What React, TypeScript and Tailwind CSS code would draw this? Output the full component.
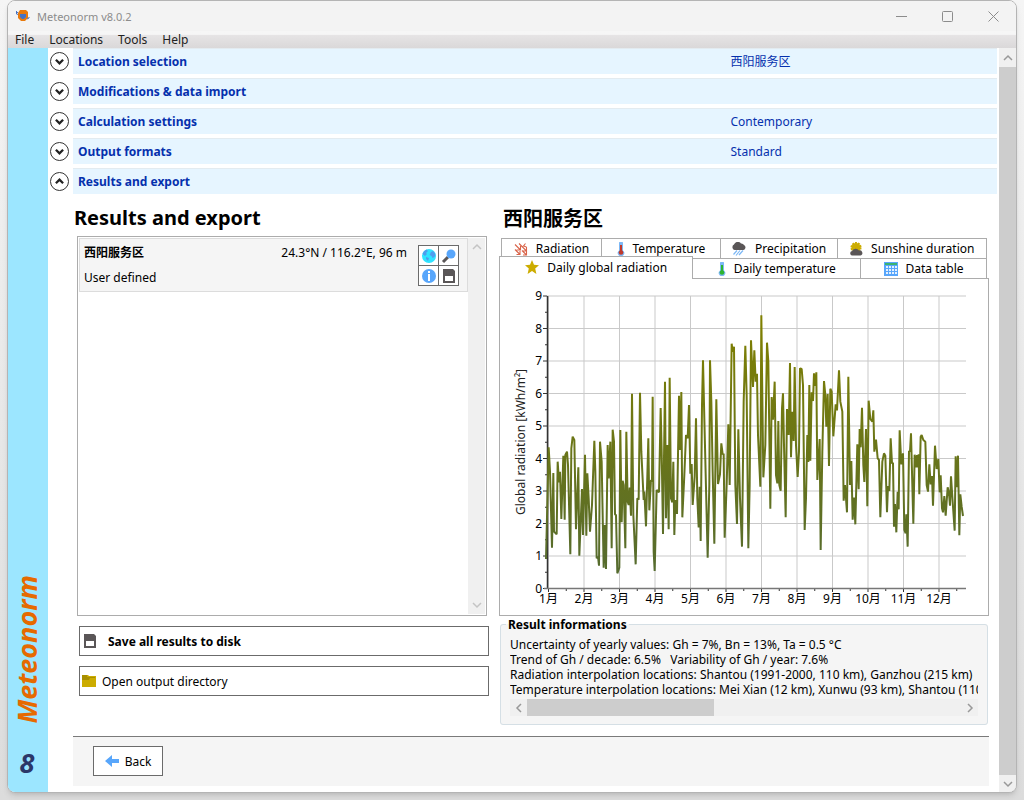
import { ReactNode } from 'react';

const SECTIONS = [
  { title: 'Location selection', value: '西阳服务区', open: false },
  { title: 'Modifications & data import', value: '', open: false },
  { title: 'Calculation settings', value: 'Contemporary', open: false },
  { title: 'Output formats', value: 'Standard', open: false },
  { title: 'Results and export', value: '', open: true },
];

// daily global radiation, plotted in thirds of a pixel
const DAILY =
  '138,822 146,487 150,560 156,788 160,564 162,740 170,748 173,530 177,592 180,560 184,702 190,512 194,704 196,510 201,500 204,540 211,808 214,490 218,455 223,465 228,733 235,547 238,812 246,612 249,750 255,509 259,752 262,565 266,640 270,740 276,660 283,467 286,560 290,820 294,815 297,842 300,470 305,530 311,848 314,720 318,852 323,480 326,580 331,470 335,790 338,434 342,470 345,688 348,690 352,865 358,848 361,435 365,712 368,587 371,600 376,790 379,440 383,650 386,660 389,608 393,692 396,326 400,690 407,838 412,640 416,644 420,323 424,500 431,645 433,620 438,724 445,460 448,676 453,585 456,590 458,335 461,800 464,858 ' +
  '470,615 477,622 482,369 485,500 489,747 495,290 498,700 502,480 506,733 509,278 513,640 517,652 520,530 523,750 526,645 531,687 537,332 540,495 544,321 547,697 553,570 558,450 563,460 567,360 571,566 575,537 578,660 584,575 588,400 592,640 596,727 599,605 602,768 606,360 609,226 613,400 623,818 628,600 630,226 634,350 638,560 643,776 649,343 654,597 660,568 664,475 668,508 671,506 674,758 680,600 685,418 689,600 695,176 698,200 702,185 706,600 711,717 715,433 720,640 726,785 731,350 736,182 740,330 745,790 749,600 753,166 759,306 763,196 767,290 771,266 774,450 781,605 784,91 ' +
  '790,577 796,480 801,173 805,230 811,671 815,336 819,404 824,290 828,570 832,595 835,408 838,600 842,617 846,370 849,325 852,480 857,697 861,372 866,450 870,234 873,517 877,380 881,468 884,246 888,480 893,576 897,500 900,250 905,252 909,300 912,560 914,735 918,640 922,450 925,531 928,300 931,527 935,322 939,348 942,265 946,303 949,262 952,585 959,462 962,795 967,500 972,288 976,330 979,425 983,327 987,543 991,311 995,320 1000,454 1007,358 1011,376 1017,256 1021,350 1027,380 1031,647 1035,600 1041,682 1045,275 1050,600 1054,528 1058,704 1062,638 1066,718 1072,478 1076,613 1079,432 1082,487 1086,368 1090,540 1093,591 1098,432 1102,664 1106,347 ' +
  '1111,402 1117,410 1120,376 1123,500 1128,464 1133,520 1137,525 1141,697 1147,530 1152,505 1156,512 1161,682 1164,603 1168,618 1172,460 1176,535 1179,533 1182,725 1185,657 1189,742 1193,620 1196,673 1199,436 1204,538 1209,505 1213,735 1217,745 1219,688 1223,785 1227,498 1230,500 1233,445 1240,716 1244,509 1248,547 1251,510 1254,547 1256,508 1258,628 1262,455 1265,450 1270,465 1276,470 1280,600 1284,620 1288,538 1292,598 1296,573 1299,662 1305,482 1310,552 1315,522 1319,622 1322,571 1326,670 1329,682 1333,633 1337,692 1343,607 1347,625 1350,662 1353,574 1358,650 1364,737 1367,514 1370,607 1374,512 1378,751 1381,628 1385,665 1389,693';

function Chevron({ dir, className = 'size-[10px] stroke-[1.5]' }: { dir: 'up' | 'down' | 'left' | 'right'; className?: string }) {
  const paths = {
    up: 'M1 7 5 3 9 7',
    down: 'M1 3 5 7 9 3',
    left: 'M7 1 3 5 7 9',
    right: 'M3 1 7 5 3 9',
  };
  return (
    <svg viewBox="0 0 10 10" className={className} fill="none" stroke="currentColor">
      <path d={paths[dir]} />
    </svg>
  );
}

function LogoIcon() {
  return (
    <svg viewBox="0 0 14 14" className="size-[14px]">
      <path d="M4 1h6l2 2v6l-3 3H5L2 9V4z" fill="#e87a0c" />
      <path d="M4 5h6v3L8 10H6L4 8z" fill="#4472c4" />
      <path d="M0 2l2 2M0.5 3v2l1.5.5M11 10l2-1M13 8v1" stroke="#4472c4" fill="none" />
    </svg>
  );
}

function RadiationIcon() {
  return (
    <svg viewBox="0 0 14 14" className="size-[14px]" fill="none" stroke="#d9644a" strokeWidth="1.1">
      <path d="M1 2.500l5 5M1 7.500l4.500 4.500M6.500 4v4H2.500M6 9v3.500H2.500M5 1.500l7 7M12.500 5v4h-4M8 8.500l4 4M12.500 9.500v3.500H9M11.500 1.500l-2 2.500 3 1" />
    </svg>
  );
}

function ThermometerIcon({ color }: { color: string }) {
  return (
    <svg viewBox="0 0 8 14" className="w-[8px] h-[14px]">
      <path d="M2 1a2 1.500 0 0 1 4 0v7.500a3.200 3.200 0 1 1-4 0z" fill="#7db8f5" />
      <circle cx="4" cy="10.500" r="2.300" fill={color} />
      <path d="M3 3h2v8H3z" fill={color} />
    </svg>
  );
}

function RainIcon() {
  return (
    <svg viewBox="0 0 16 14" className="w-[16px] h-[14px]">
      <path d="M3.500 8a3 3 0 0 1-.5-5.500A4 4 0 0 1 10 1.500a3 3 0 0 1 3 1.500 2.700 2.700 0 0 1-.5 5z" fill="#5a5657" />
      <path d="M6 8.500l-3.500 4M9 8.500l-4 5M12 8.500l-4 4.500" stroke="#7db8f5" strokeWidth="1.200" />
    </svg>
  );
}

function SunCloudIcon() {
  return (
    <svg viewBox="0 0 14 14" className="size-[14px]">
      <circle cx="7" cy="5.500" r="4.500" fill="#ccac00" />
      <circle cx="7" cy="5.500" r="4.800" fill="none" stroke="#ccac00" strokeWidth="1.500" strokeDasharray="2 1" />
      <path d="M3 13.500a2.300 2.300 0 0 1 0-4.500 4 4 0 0 1 7-.5 2.500 2.500 0 0 1 1.500 5z" fill="#5a5657" />
    </svg>
  );
}

function StarIcon() {
  return (
    <svg viewBox="0 0 14 14" className="size-[14px]">
      <path d="M7 0l2 4.800 5 .4-3.800 3.400L11.400 14 7 11 2.600 14l1.200-5.400L0 5.200l5-.4z" fill="#ccac00" />
    </svg>
  );
}

function TableIcon() {
  return (
    <svg viewBox="0 0 14 14" className="size-[14px]">
      <path d="M0 0h14v14H0z" fill="#58a6fb" />
      <path d="M1 1h12v2H1z" fill="#3cb371" />
      <path d="M2 4h2v2H2zM5 4h2v2H5zM8 4h2v2H8zM11 4h2v2h-2zM2 7h2v2H2zM5 7h2v2H5zM8 7h2v2H8zM11 7h2v2h-2zM2 10h2v2H2zM5 10h2v2H5zM8 10h2v2H8zM11 10h2v2h-2z" fill="#e4f1ff" />
    </svg>
  );
}

function GlobeIcon() {
  return (
    <svg viewBox="0 0 16 16" className="size-[16px]">
      <circle cx="8" cy="8" r="7" fill="#2fe3ff" />
      <path d="M1.500 6a7 7 0 0 1 4-4.500L7 3 5 5l1 1-2 2zM5 9l3 1-1 3-2-2zM10 4l2-1 2.500 3-1 3-2 1-1-2-2-1z" fill="#4f9dee" />
    </svg>
  );
}

function MagnifierIcon() {
  return (
    <svg viewBox="0 0 16 16" className="size-[16px]">
      <path d="M2 14l5-5" stroke="#5a5657" strokeWidth="3" />
      <circle cx="10" cy="6" r="4.500" fill="#58a6fb" />
    </svg>
  );
}

function InfoIcon() {
  return (
    <svg viewBox="0 0 16 16" className="size-[16px]">
      <circle cx="8" cy="8" r="7" fill="#58a6fb" />
      <path d="M7 3h2v2H7zM7 6h2v7H7z" fill="#fff" />
    </svg>
  );
}

function DiskIcon() {
  return (
    <svg viewBox="0 0 16 16" className="size-[16px]">
      <path d="M2 1h10l2 2v12H2z" fill="#5a5657" />
      <path d="M4 8h8v5H4z" fill="#fff" />
    </svg>
  );
}

function FolderIcon() {
  return (
    <svg viewBox="0 0 14 14" className="size-[14px]">
      <path d="M0 1h6l1 1h7v11H0z" fill="#ccac00" />
      <path d="M0 1h5v2h8v1H8L7 6H0z" fill="#a88f00" />
    </svg>
  );
}

function BackArrowIcon() {
  return (
    <svg viewBox="0 0 14 12" className="w-[14px] h-[12px]">
      <path d="M0 6l7-6v4h7v4H7v4z" fill="#58a6fb" />
    </svg>
  );
}

function Tab({ icon, label, className }: { icon: ReactNode; label: string; className: string }) {
  return (
    <button role="tab" className={`flex items-center justify-center gap-2 border-[#acacac] bg-white whitespace-nowrap ${className}`}>
      {icon}
      {label}
    </button>
  );
}

function RadiationChart() {
  const rows = Array.from({ length: 10 }, (_, i) => i);
  const months = Array.from({ length: 12 }, (_, i) => i);
  const y = (v: number) => 309.5 - v * 32.5;
  const x = (m: number) => 48.5 + m * 35.5;

  return (
    <svg viewBox="0 0 488 336" className="block w-full" role="img" aria-label="Daily global radiation">
      <defs>
        <linearGradient id="olive" gradientUnits="userSpaceOnUse" x1="0" y1="90" x2="0" y2="865">
          <stop offset="0" stopColor="#808000" />
          <stop offset="1" stopColor="#556b2f" />
        </linearGradient>
      </defs>

      {/* Grid and ticks */}
      {rows.map((v) => (
        <g key={v}>
          <path d={`M47 ${y(v)}H466`} stroke="#c9c9c9" />
          <path d={`M43 ${y(v)}h4`} stroke="#333" />
          {v < 9 && <path d={`M45 ${y(v + 0.5)}h2`} stroke="#333" />}
          <text x="42" y={y(v) + 4} textAnchor="end" fontSize="12">{v}</text>
        </g>
      ))}
      {months.map((m) => (
        <g key={m}>
          <path d={`M${x(m)} 17V309`} stroke="#c9c9c9" />
          <path d={`M${x(m)} 309v4`} stroke="#333" />
          <path d={`M${x(m + 0.5)} 309v3`} stroke="#333" />
          <text x={x(m)} y="324" textAnchor="middle" fontSize="12">{`${m + 1}月`}</text>
        </g>
      ))}
      <path d="M47.500 17V310" stroke="#333" strokeWidth="1.5" />
      <path d="M44 309.500H466" stroke="#777" strokeWidth="1.5" />

      <g transform="translate(0 6) scale(.33333)">
        <polyline points={DAILY} fill="none" stroke="url(#olive)" strokeWidth="6" strokeLinejoin="bevel" />
      </g>

      <text transform="translate(25 163) rotate(-90)" textAnchor="middle" fontSize="12" fill="#222">
        Global radiation [kWh/m²]
      </text>
    </svg>
  );
}

export default function App() {
  return (
    <div className="flex min-h-screen bg-linear-to-b from-[#f5f5f5] to-[#dcdcdc] pr-[7px] pb-[7px] pl-[7px] font-['Noto_Sans','Noto_Sans_CJK_SC',sans-serif] text-[12px] leading-[15px] text-black">
      <div className="flex min-w-0 flex-1 flex-col overflow-hidden rounded-lg border border-[#b4b4b4] bg-white shadow-md">
        {/* Title bar */}
        <header className="flex h-[30px] items-center bg-[#f3f3f3] pl-2 text-[#8c8c8c]">
          <LogoIcon />
          <span className="ml-[7px] text-[11px]">Meteonorm v8.0.2</span>
          <div className="ml-auto flex">
            <button aria-label="Minimize" className="flex w-[46px] justify-center">
              <svg viewBox="0 0 11 11" className="size-[11px]" stroke="currentColor"><path d="M0 5.500h11" /></svg>
            </button>
            <button aria-label="Maximize" className="flex w-[46px] justify-center">
              <svg viewBox="0 0 11 11" className="size-[11px]" stroke="currentColor" fill="none"><rect x=".5" y=".5" width="10" height="10" rx="1" /></svg>
            </button>
            <button aria-label="Close" className="flex w-[46px] justify-center">
              <svg viewBox="0 0 11 11" className="size-[11px]" stroke="currentColor"><path d="M.5.5l10 10M10.500.5l-10 10" /></svg>
            </button>
          </div>
        </header>

        {/* Menu bar */}
        <nav className="flex h-[17px] items-center gap-[15px] bg-linear-to-b from-[#f6f6f6] from-20% via-[#e6e4e5] via-25% to-[#dad8d9] pl-[7px] text-[#222]">
          <button>File</button>
          <button>Locations</button>
          <button>Tools</button>
          <button>Help</button>
        </nav>

        <div className="flex flex-1">
          {/* Brand strip */}
          <aside className="flex w-10 shrink-0 flex-col items-center justify-end bg-[#9ce6ff] pr-0.5 pb-[14px] font-['Open_Sans',sans-serif] text-[27px] leading-[30px] font-bold italic">
            <span className="mb-6 rotate-180 text-[#e66a00] [writing-mode:vertical-rl]">Meteonorm</span>
            <span className="text-[#2b3768]">8</span>
          </aside>

          <main className="flex min-w-0 flex-1 flex-col pr-0.5 pb-1.5">
            {/* Collapsible sections */}
            <div className="flex flex-col gap-1">
              {SECTIONS.map((s) => (
                <div key={s.title} className="flex items-center gap-1 pl-0.5">
                  <button
                    aria-label={s.title}
                    aria-expanded={s.open}
                    className="flex size-[19px] items-center justify-center rounded-full border border-[#333] text-[#222]"
                  >
                    <Chevron dir={s.open ? 'up' : 'down'} className="size-[9px] stroke-[2.5]" />
                  </button>
                  <div className="flex h-[26px] flex-1 items-center border-t border-[#e3ebf0] bg-[#e6f5ff] pl-[5px] text-[#0530ad]">
                    <span className="w-[71%] font-bold">{s.title}</span>
                    <span>{s.value}</span>
                  </div>
                </div>
              ))}
            </div>

            {/* Results */}
            <div className="flex flex-1 gap-3 pr-2 pl-[29px]">
              <section className="flex min-w-0 flex-[410] flex-col">
                <h1 className="-ml-[3px] pt-3 pb-[6px] text-xl leading-[24px] font-bold">Results and export</h1>
                <div className="flex flex-1 border border-[#acacac] p-px">
                  <div className="flex-1">
                    <div className="flex justify-between border border-[#dcdcdc] bg-[#f5f5f5] pt-1.5 pr-2 pb-[5px] pl-1">
                      <div className="flex flex-col justify-between pb-px">
                        <span className="font-bold">西阳服务区</span>
                        <span>User defined</span>
                      </div>
                      <div className="flex gap-[11px]">
                        <span>24.3°N / 116.2°E, 96 m</span>
                        <div className="grid grid-cols-2 gap-px border border-[#6b6b6b] bg-[#6b6b6b]">
                          <button aria-label="Show on map" className="flex size-[19px] items-center justify-center bg-white"><GlobeIcon /></button>
                          <button aria-label="Preview" className="flex size-[19px] items-center justify-center bg-white"><MagnifierIcon /></button>
                          <button aria-label="Information" className="flex size-[19px] items-center justify-center bg-white"><InfoIcon /></button>
                          <button aria-label="Save" className="flex size-[19px] items-center justify-center bg-white"><DiskIcon /></button>
                        </div>
                      </div>
                    </div>
                  </div>
                  <div className="flex w-[17px] flex-col items-center justify-between bg-[#f0f0f0] py-1 text-[#c4c4c4]">
                    <Chevron dir="up" />
                    <Chevron dir="down" />
                  </div>
                </div>
                <div className="mt-[10px] mb-10 -mr-0.5 ml-0.5 flex flex-col gap-[10px]">
                  <button className="flex h-[30px] items-center gap-[10px] border border-[#6b6b6b] bg-white pl-0.5 font-bold">
                    <DiskIcon />
                    Save all results to disk
                  </button>
                  <button className="flex h-[30px] items-center gap-1.5 border border-[#6b6b6b] bg-white pl-0.5">
                    <FolderIcon />
                    Open output directory
                  </button>
                </div>
              </section>

              <section className="flex min-w-0 flex-[490] flex-col">
                <h2 className="pt-[13px] pb-[7px] pl-1 text-xl leading-[24px] font-bold">西阳服务区</h2>
                <div role="tablist">
                  <div className="mx-0.5 flex h-5 border-l border-[#acacac]">
                    <Tab icon={<RadiationIcon />} label="Radiation" className="flex-[100] border-t border-r" />
                    <Tab icon={<ThermometerIcon color="#c0392b" />} label="Temperature" className="flex-[119] border-t border-r" />
                    <Tab icon={<RainIcon />} label="Precipitation" className="flex-[117] border-t border-r" />
                    <Tab icon={<SunCloudIcon />} label="Sunshine duration" className="flex-[150] border-t border-r" />
                  </div>
                  <div className="mr-0.5 flex h-5 items-end">
                    <Tab icon={<StarIcon />} label="Daily global radiation" className="z-10 -mb-px h-[23px] flex-[194] border-x border-t pb-0.5" />
                    <Tab icon={<ThermometerIcon color="#2fb52f" />} label="Daily temperature" className="h-5 flex-[168] border-t border-r" />
                    <Tab icon={<TableIcon />} label="Data table" className="h-5 flex-[126] border-t border-r" />
                  </div>
                </div>
                <div className="border border-[#acacac]">
                  <RadiationChart />
                </div>

                <fieldset className="mx-px mt-px min-w-0 rounded-[3px] border border-[#d5dfe5] bg-[#f5f5f5] px-[9px] pt-1 pb-2">
                  <legend className="-ml-1 bg-linear-to-b from-white from-50% to-[#f5f5f5] to-50% px-0.5 font-bold">Result informations</legend>
                  <div className="overflow-hidden py-px whitespace-pre">
                    <p>Uncertainty of yearly values: Gh = 7%, Bn = 13%, Ta = 0.5 °C</p>
                    <p>Trend of Gh / decade: 6.5%   Variability of Gh / year: 7.6%</p>
                    <p>Radiation interpolation locations: Shantou (1991-2000, 110 km), Ganzhou (215 km)</p>
                    <p>Temperature interpolation locations: Mei Xian (12 km), Xunwu (93 km), Shantou (110 km)</p>
                  </div>
                  <div className="mt-px flex h-[17px] items-center bg-[#f0f0f0] text-[#999]">
                    <span className="flex w-[17px] justify-center"><Chevron dir="left" /></span>
                    <div className="flex h-full flex-1"><div className="w-[43%] bg-[#cdcdcd]" /></div>
                    <span className="flex w-[17px] justify-center"><Chevron dir="right" /></span>
                  </div>
                </fieldset>
              </section>
            </div>

            {/* Footer */}
            <footer className="mr-2 ml-[25px] border-t border-[#7a7a7a] bg-[#f5f5f5] px-5 pt-[9px] pb-[10px]">
              <button className="flex h-[30px] w-[70px] items-center justify-center gap-1.5 border border-[#6b6b6b] bg-white">
                <BackArrowIcon />
                Back
              </button>
            </footer>
          </main>

          {/* Page scrollbar */}
          <div className="flex w-[17px] shrink-0 flex-col items-center bg-[#cdcdcd] text-[#999]">
            <span className="flex h-[19px] w-full items-center justify-center bg-[#f0f0f0]"><Chevron dir="up" /></span>
            <span className="mt-auto flex h-[17px] w-full items-center justify-center bg-[#f0f0f0]"><Chevron dir="down" /></span>
          </div>
        </div>
      </div>
    </div>
  );
}
